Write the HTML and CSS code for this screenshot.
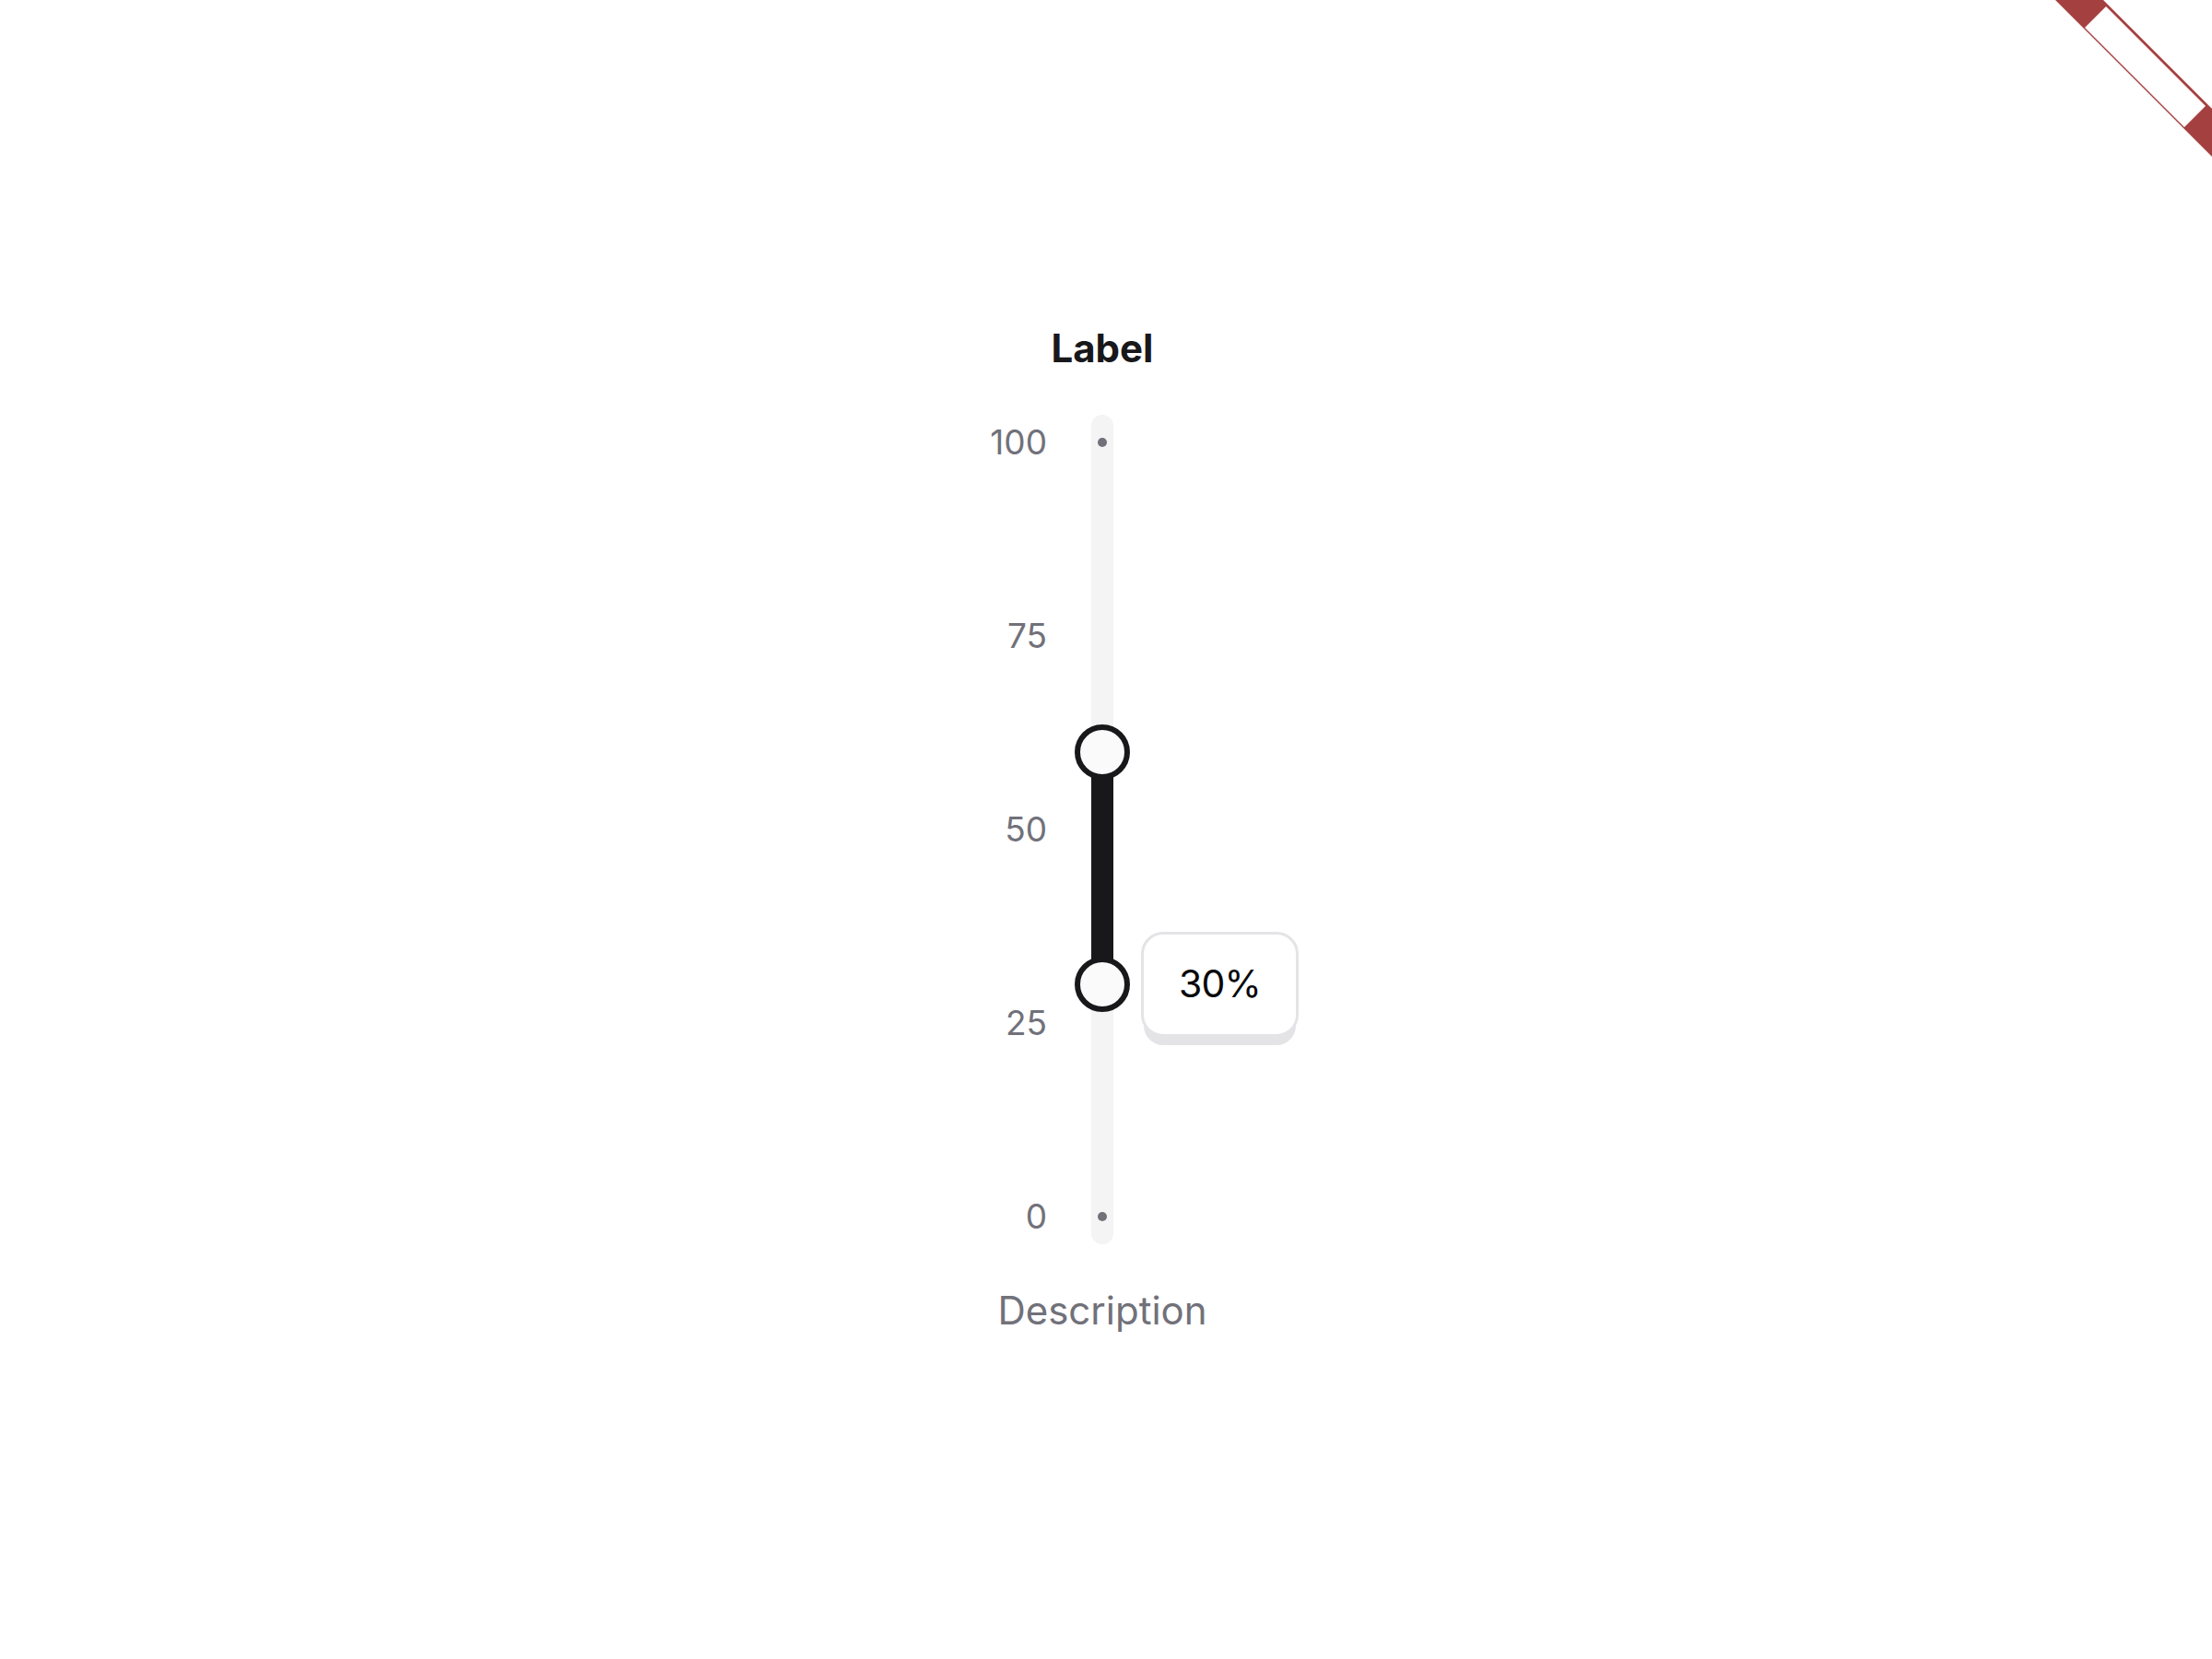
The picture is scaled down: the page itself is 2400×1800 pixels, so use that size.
FILE: index.html
```html
<!DOCTYPE html>
<html lang="en">
<head>
    <meta charset="UTF-8">
    <meta name="viewport" content="width=device-width, initial-scale=1.0">
    <title>Range slider</title>
    <link rel="stylesheet" href="styles.css">
</head>
<body>
    <svg class="corner-ribbon" xmlns="http://www.w3.org/2000/svg" width="200" height="180" viewBox="2200 0 200 180">
        <polygon class="ribbon-band" points="2230,0 2282,0 2400,118 2400,170"></polygon>
        <polygon class="ribbon-inner" points="2285,7 2393,115 2370,138 2262,30"></polygon>
        <line class="ribbon-line" x1="2261" y1="30" x2="2370" y2="139"></line>
    </svg>

    <div class="slider-field">
        <div class="slider-label">Label</div>
        <div class="slider-body">
            <div class="slider-scale">
                <span>100</span>
                <span>75</span>
                <span>50</span>
                <span>25</span>
                <span>0</span>
            </div>
            <div class="slider-track">
                <span class="slider-dot dot-top"></span>
                <span class="slider-dot dot-bottom"></span>
                <div class="slider-fill"></div>
                <div class="slider-thumb thumb-high"></div>
                <div class="slider-thumb thumb-low"></div>
                <div class="slider-tooltip">30%</div>
            </div>
        </div>
        <div class="slider-description">Description</div>
    </div>
</body>
</html>
```

FILE: styles.css
```css
:root {
    --color-text: #18181b;
    --color-muted: #71717a;
    --color-track: #f4f4f5;
    --color-thumb: #fafafa;
    --color-border: #e4e4e7;
    --color-ribbon: #a54040;
}

* {
    margin: 0;
    padding: 0;
    box-sizing: border-box;
}

body {
    font-family: 'Inter', 'Liberation Sans', sans-serif;
    background: #ffffff;
    min-height: 100vh;
    padding: 350px 8px 0 0;
    display: flex;
    justify-content: center;
    align-items: flex-start;
    overflow: hidden;
}

.corner-ribbon {
    position: absolute;
    top: 0;
    right: 0;
}

.ribbon-band {
    fill: var(--color-ribbon);
}

.ribbon-inner {
    fill: #ffffff;
}

.ribbon-line {
    stroke: var(--color-ribbon);
    stroke-width: 0.7;
}

.slider-field {
    display: flex;
    flex-direction: column;
    align-items: center;
    gap: 44px;
}

.slider-label {
    font-size: 42px;
    font-weight: 700;
    line-height: 56px;
    color: var(--color-text);
}

.slider-body {
    display: grid;
    grid-template-columns: 200px 24px 200px;
    column-gap: 48px;
    height: 900px;
}

.slider-scale {
    display: flex;
    flex-direction: column;
    justify-content: space-between;
    align-items: flex-end;
    padding: 8px 0;
    font-size: 37px;
    line-height: 44px;
    color: var(--color-muted);
}

.slider-track {
    position: relative;
    width: 24px;
    height: 900px;
    background: var(--color-track);
    border-radius: 12px;
}

.slider-dot {
    position: absolute;
    left: 7px;
    width: 10px;
    height: 10px;
    border-radius: 50%;
    background: var(--color-muted);
}

.dot-top {
    top: 25px;
}

.dot-bottom {
    bottom: 25px;
}

.slider-fill {
    position: absolute;
    left: 0;
    top: 366px;
    width: 24px;
    height: 252px;
    background: var(--color-text);
}

.slider-thumb {
    position: absolute;
    left: -18px;
    width: 60px;
    height: 60px;
    background: var(--color-thumb);
    border: 6px solid var(--color-text);
    border-radius: 50%;
}

.thumb-high {
    top: 336px;
}

.thumb-low {
    top: 588px;
}

.slider-tooltip {
    position: absolute;
    left: 54px;
    top: 561px;
    width: 171px;
    height: 114px;
    display: flex;
    align-items: center;
    justify-content: center;
    padding-bottom: 2px;
    background: #ffffff;
    border: 3px solid var(--color-border);
    border-radius: 24px;
    box-shadow: 0 12px 0 -3px var(--color-border);
    font-size: 41px;
    letter-spacing: -0.8px;
    color: #09090b;
}

.slider-description {
    font-size: 42px;
    line-height: 56px;
    color: var(--color-muted);
}
```
